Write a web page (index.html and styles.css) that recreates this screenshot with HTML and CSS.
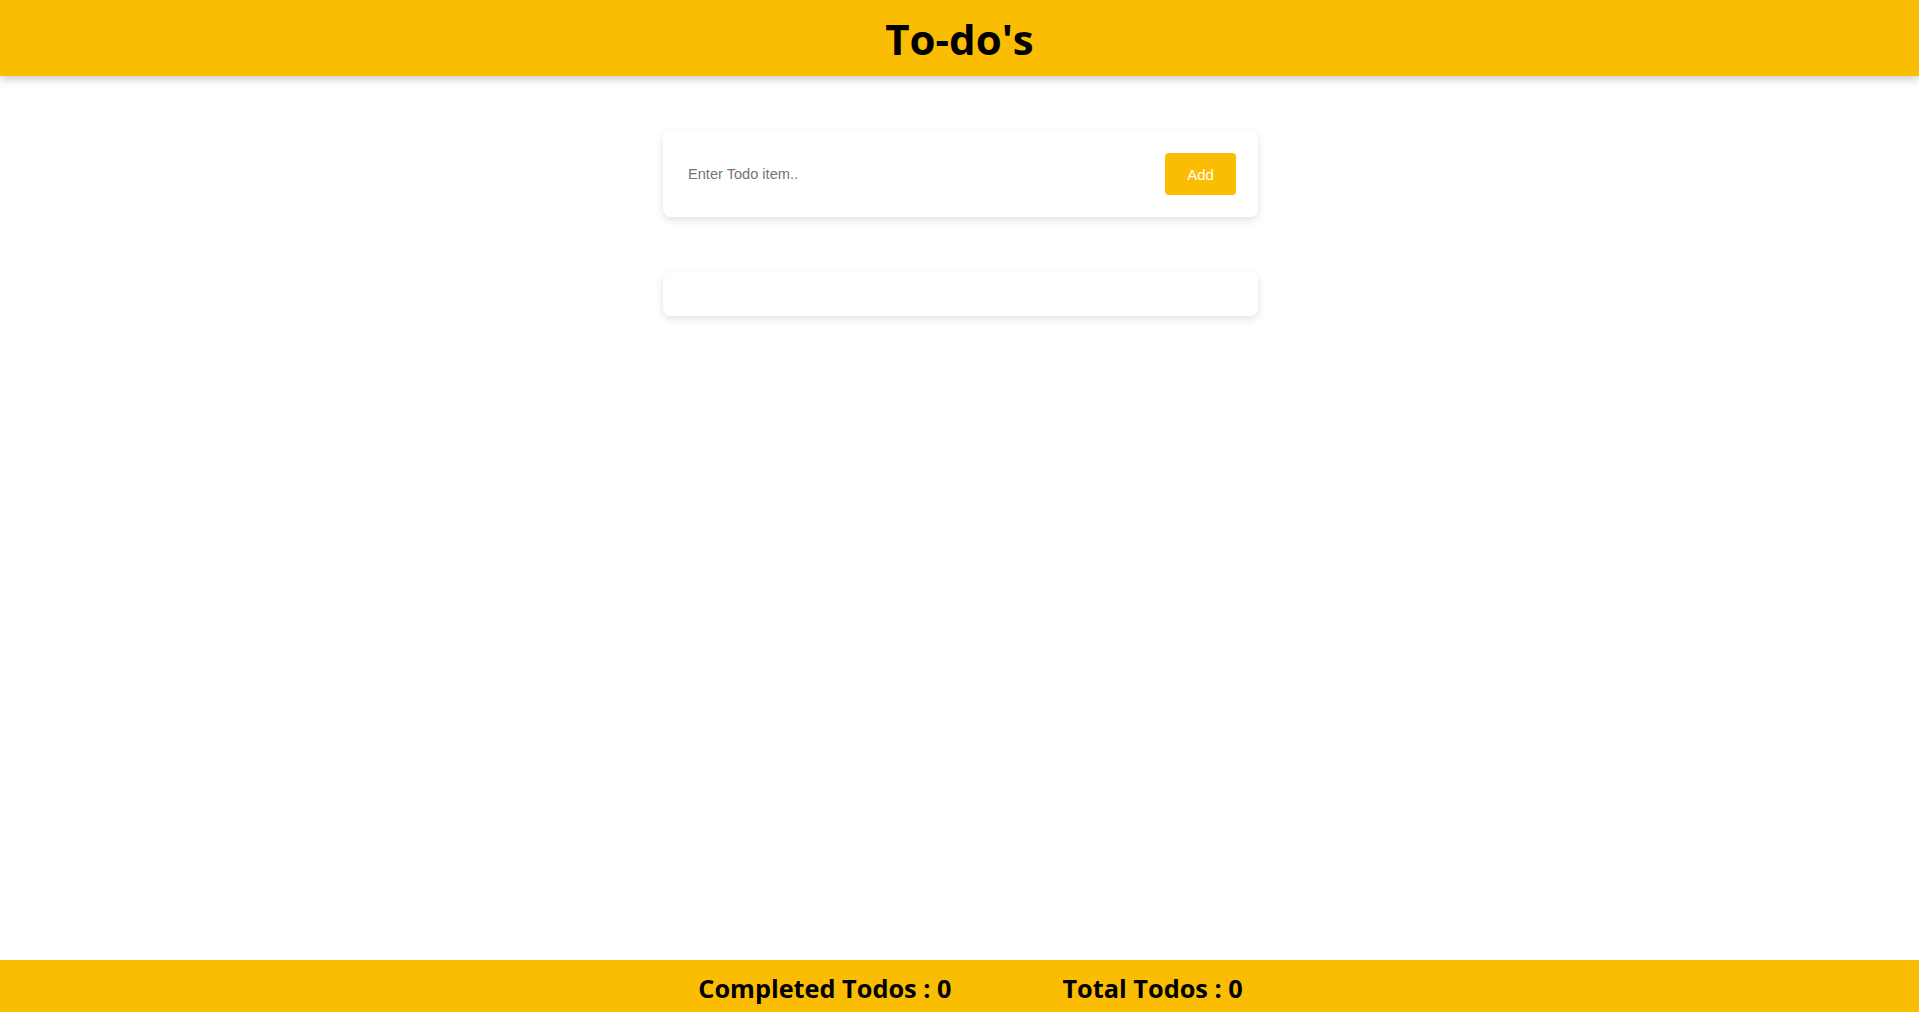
FILE: index.html
```html
<!DOCTYPE html>
<html>
<head>
<meta charset="utf-8">
<link rel="stylesheet" href="styles.css">
<title>To-do's</title>
</head>
<body>
<header class="topbar"><h1 class="title">To-do's</h1></header>
<main class="content">
  <form class="card entry">
    <input class="entry-input" type="text" placeholder="Enter Todo item..">
    <button class="entry-btn" type="button">Add</button>
  </form>
  <section class="card list"></section>
</main>
<footer class="bottombar">
  <span class="stat">Completed Todos : 0</span>
  <span class="stat">Total Todos : 0</span>
</footer>
</body>
</html>
```

FILE: styles.css
```css
* { box-sizing: border-box; }
html, body { height: 100%; }
body {
  margin: 0;
  font-family: "Open Sans", "Noto Sans", sans-serif;
  background: #fff;
  display: flex;
  flex-direction: column;
}
.topbar {
  height: 76px;
  background: #fabd02;
  display: flex;
  align-items: center;
  justify-content: center;
  box-shadow: 0 4px 8px rgba(0,0,0,0.18);
  position: relative;
  z-index: 1;
}
.title {
  margin: 0;
  font-size: 42px;
  font-weight: 700;
  color: #000;
  line-height: 1;
  padding-top: 1px;
}
.content {
  flex: 1;
  display: flex;
  flex-direction: column;
  align-items: center;
  padding-top: 55px;
  padding-left: 2px;
  gap: 55px;
}
.card {
  width: 595px;
  background: #fff;
  border-radius: 8px;
  box-shadow: 0 3px 8px rgba(0,0,0,0.12);
}
.entry {
  margin: 0;
  height: 86px;
  display: flex;
  align-items: center;
  padding: 0 22px 0 25px;
}
.entry-input {
  flex: 1;
  border: none;
  outline: none;
  font-family: "Liberation Sans", Arial, sans-serif;
  font-size: 14.6px;
  color: #333;
  background: transparent;
  padding: 0;
}
.entry-input::placeholder { color: #757575; }
.entry-btn {
  width: 71px;
  height: 42px;
  border: none;
  border-radius: 4px;
  background: #fabd02;
  color: #fff;
  font-family: "Liberation Sans", Arial, sans-serif;
  font-size: 15px;
}
.list { height: 44px; }
.bottombar {
  height: 52px;
  background: #fabd02;
  display: flex;
  align-items: center;
  justify-content: center;
  gap: 111px;
  padding-left: 22px;
  padding-top: 4px;
}
.stat {
  font-size: 25.3px;
  font-weight: 700;
  color: #000;
}
```
